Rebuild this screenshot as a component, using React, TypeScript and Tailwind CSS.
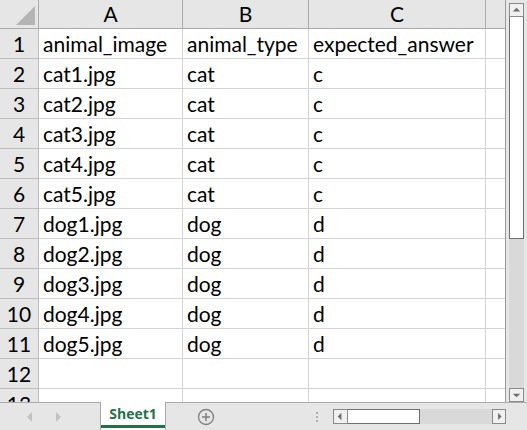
import React from "react";

const rows: [string, string, string][] = [
  ["animal_image", "animal_type", "expected_answer"],
  ["cat1.jpg", "cat", "c"],
  ["cat2.jpg", "cat", "c"],
  ["cat3.jpg", "cat", "c"],
  ["cat4.jpg", "cat", "c"],
  ["cat5.jpg", "cat", "c"],
  ["dog1.jpg", "dog", "d"],
  ["dog2.jpg", "dog", "d"],
  ["dog3.jpg", "dog", "d"],
  ["dog4.jpg", "dog", "d"],
  ["dog5.jpg", "dog", "d"],
  ["", "", ""],
  ["", "", ""],
];

const font = { fontFamily: "Lato, 'Liberation Sans', sans-serif" };

function Row({ n, cells }: { n: number; cells: [string, string, string] }) {
  return (
    <div className="flex h-[30px] shrink-0 text-[21px] text-black">
      <div className="w-[39px] shrink-0 bg-[#e6e6e6] border-r border-b border-[#bdbdbd] flex items-end justify-center pb-[2px] leading-none">
        <span className="pb-[2px]">{n}</span>
      </div>
      <div className="w-[144px] shrink-0 border-r border-b border-[#d4d4d4] flex items-end pl-[4px] pb-[4px] leading-none whitespace-nowrap">
        {cells[0]}
      </div>
      <div className="w-[126px] shrink-0 border-r border-b border-[#d4d4d4] flex items-end pl-[4px] pb-[4px] leading-none whitespace-nowrap">
        {cells[1]}
      </div>
      <div className="w-[177px] shrink-0 border-r border-b border-[#d4d4d4] flex items-end pl-[4px] pb-[4px] leading-none whitespace-nowrap">
        {cells[2]}
      </div>
      <div className="w-[19px] shrink-0 border-b border-[#d4d4d4]" />
    </div>
  );
}

function ArrowBox({ dir, className }: { dir: "up" | "down" | "left" | "right"; className?: string }) {
  const pts =
    dir === "up"
      ? "3,8 11,8 7,4"
      : dir === "down"
      ? "3,5 11,5 7,9"
      : dir === "left"
      ? "8,3 8,11 4,7"
      : "6,3 6,11 10,7";
  return (
    <div className={"bg-[#f0f0f0] border border-[#8a8a8a] flex items-center justify-center " + (className ?? "")}>
      <svg width="13" height="13" viewBox="0 0 14 14">
        <polygon points={pts} fill="#6d6d6d" />
      </svg>
    </div>
  );
}

export default function App() {
  return (
    <div className="w-[527px] h-[430px] overflow-hidden bg-white flex flex-col" style={font}>
      <div className="flex h-[402px] shrink-0">
        {/* grid */}
        <div className="w-[506px] shrink-0 h-full overflow-hidden border-r border-[#9a9a9a] flex flex-col">
          {/* header */}
          <div className="flex h-[29px] shrink-0 bg-[#e6e6e6] text-[21px] text-black leading-none">
            <div className="w-[39px] shrink-0 border-r border-b border-[#ababab] relative">
              <svg className="absolute left-0 top-0" width="38" height="28" viewBox="0 0 38 28">
                <polygon points="35,6 35,25 16,25" fill="#b4b4b4" />
              </svg>
            </div>
            <div className="w-[144px] shrink-0 border-r border-b border-[#ababab] flex items-end justify-center pb-[4px]">A</div>
            <div className="w-[126px] shrink-0 border-r border-b border-[#ababab] flex items-end justify-center pb-[4px]">B</div>
            <div className="w-[177px] shrink-0 border-r border-b border-[#ababab] flex items-end justify-center pb-[4px]">C</div>
            <div className="w-[19px] shrink-0 border-b border-[#ababab]" />
          </div>
          {rows.map((r, i) => (
            <Row key={i} n={i + 1} cells={r} />
          ))}
        </div>
        {/* vertical scrollbar */}
        <div className="flex-1 h-full bg-[#e6e6e6] flex flex-col pl-[3px] pr-[3px] pt-[3px]">
          <ArrowBox dir="up" className="h-[14px] w-[15px] shrink-0" />
          <div className="h-[222px] w-[15px] shrink-0 bg-white border border-[#6f6f6f] border-t-0" />
          <div className="flex-1 w-[15px] bg-[#d9d9d9]" />
          <ArrowBox dir="down" className="h-[14px] w-[15px] shrink-0" />
        </div>
      </div>
      {/* bottom bar */}
      <div className="flex-1 bg-[#e6e6e6] flex relative">
        <div className="w-[100px] shrink-0 border-t border-[#ababab] flex items-center">
          <svg className="ml-[25px]" width="10" height="12" viewBox="0 0 10 12">
            <polygon points="7,1 7,11 2,6" fill="#c2c2c2" />
          </svg>
          <svg className="ml-[18px]" width="10" height="12" viewBox="0 0 10 12">
            <polygon points="3,1 3,11 8,6" fill="#c2c2c2" />
          </svg>
        </div>
        <div className="w-[66px] shrink-0 bg-white border-l border-r border-[#ababab] flex flex-col">
          <div className="flex-1 flex items-center justify-center text-[14px] font-bold text-[#217346]" style={{ fontFamily: "'Open Sans', sans-serif" }}>
            Sheet1
          </div>
          <div className="h-[3px] bg-[#217346] mb-[2px]" />
        </div>
        <div className="flex-1 border-t border-[#ababab] flex items-center">
          <svg className="ml-[31px]" width="18" height="18" viewBox="0 0 18 18">
            <circle cx="9" cy="9" r="7.5" fill="none" stroke="#7f7f7f" strokeWidth="1.3" />
            <path d="M9 5 V13 M5 9 H13" stroke="#7f7f7f" strokeWidth="1.5" />
          </svg>
          <div className="ml-[101px] flex flex-col gap-[2px]">
            <div className="w-[2px] h-[2px] bg-[#b0b0b0]" />
            <div className="w-[2px] h-[2px] bg-[#b0b0b0]" />
            <div className="w-[2px] h-[2px] bg-[#b0b0b0]" />
          </div>
          <div className="ml-[15px] flex h-[15px]">
            <ArrowBox dir="left" className="w-[15px] h-[15px] shrink-0" />
            <div className="w-[72px] h-[15px] bg-white border border-[#6f6f6f] border-l-0" />
            <div className="w-[72px] h-[15px] bg-[#d9d9d9]" />
            <ArrowBox dir="right" className="w-[14px] h-[15px] shrink-0" />
          </div>
        </div>
      </div>
    </div>
  );
}
